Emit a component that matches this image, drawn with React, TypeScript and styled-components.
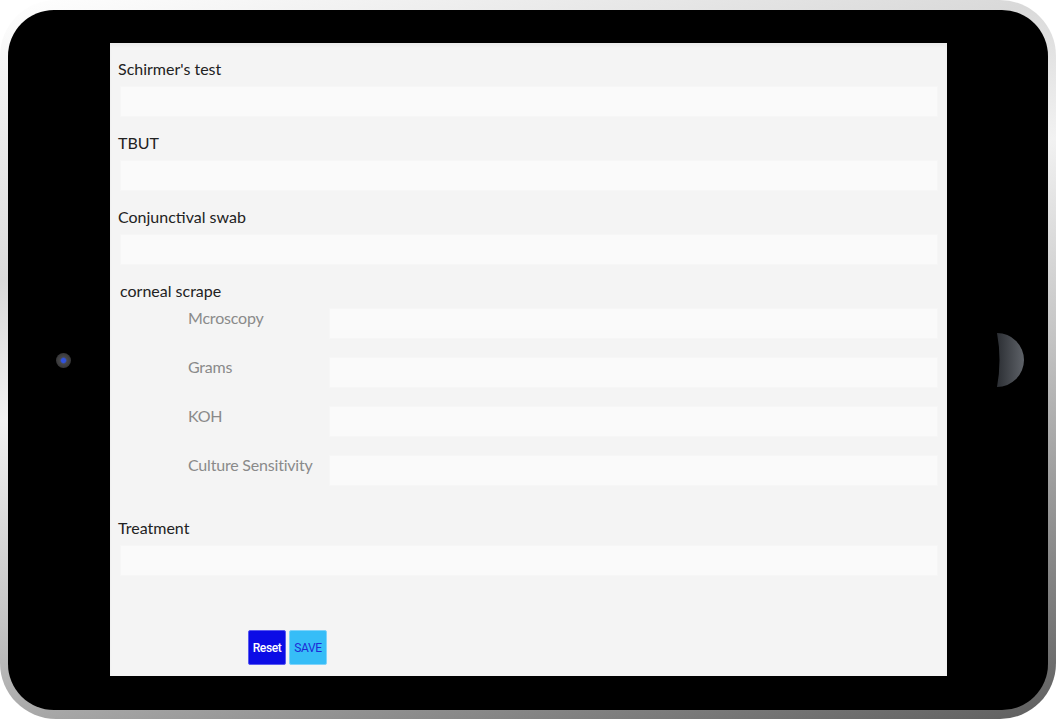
import React from 'react';
import styled, { createGlobalStyle } from 'styled-components';

const Global = createGlobalStyle`
  html, body {
    margin: 0;
    padding: 0;
    background: #ffffff;
  }
  * {
    box-sizing: border-box;
  }
`;

const Bezel = styled.div`
  width: 1056px;
  height: 719px;
  padding: 10px 8px 9px 8px;
  border-radius: 56px;
  background: linear-gradient(
    165deg,
    #ffffff 0%,
    #d9d9d9 28%,
    #f2f2f2 42%,
    #c4c4c4 62%,
    #8d8d8d 82%,
    #5f5f5f 100%
  );
`;

const Body = styled.div`
  width: 100%;
  height: 100%;
  background: #000;
  border-radius: 46px;
  display: flex;
  align-items: center;
`;

const SideColumn = styled.div<{ $width: number }>`
  width: ${(p) => p.$width}px;
  flex: none;
  display: flex;
  align-items: center;
  padding-left: 49px;
`;

const Camera = styled.div`
  width: 15px;
  height: 15px;
  margin-left: -1px;
  border-radius: 50%;
  background: radial-gradient(circle at 50% 50%, #2f52e0 0 2px, #474749 3.5px, #363638 7.5px);
`;

const Screen = styled.div`
  width: 837px;
  height: 633px;
  align-self: flex-start;
  margin-top: 33px;
  background: #f4f4f4;
  box-shadow: inset 0 3px 3px rgba(0, 0, 0, 0.035);
  padding: 16px 9px 0 8px;
  font-family: Lato, 'Noto Sans', sans-serif;
`;

const Section = styled.div`
  margin-bottom: 16px;
`;

const Label = styled.div<{ $shift?: number }>`
  font-size: 16px;
  line-height: 20px;
  color: #222;
  margin-bottom: 7px;
  margin-left: ${(p) => p.$shift ?? 0}px;
`;

const Field = styled.div`
  height: 31px;
  margin-left: 2px;
  background: #fafafa;
  border: 1px solid #f6f6f6;
`;

const SubList = styled.div`
  display: flex;
  flex-direction: column;
  gap: 18px;
  margin-left: 70px;
  margin-top: 1px;
  margin-bottom: 32px;
`;

const SubRow = styled.div`
  display: flex;
  align-items: flex-start;
`;

const SubLabel = styled.div`
  width: 141px;
  flex: none;
  font-size: 16px;
  line-height: 20px;
  letter-spacing: -0.2px;
  color: #8a8a8a;
`;

const SubField = styled.div`
  flex: 1;
  height: 31px;
  background: #fafafa;
  border: 1px solid #f6f6f6;
`;

const Actions = styled.div`
  display: flex;
  gap: 3px;
  margin-left: 130px;
  margin-top: 54px;
`;

const Button = styled.button<{ $primary?: boolean }>`
  width: 38px;
  height: 35px;
  padding: 0;
  border-radius: 2px;
  font-family: Roboto, 'Liberation Sans', sans-serif;
  font-size: 12px;
  font-weight: ${(p) => (p.$primary ? 500 : 400)};
  letter-spacing: -0.4px;
  cursor: pointer;
  background: ${(p) => (p.$primary ? '#0c0ce6' : '#36bdf7')};
  color: ${(p) => (p.$primary ? '#ffffff' : '#1e2bd6')};
  border: 1px solid ${(p) => (p.$primary ? '#5a5af0' : '#7fd3fa')};
`;

const HomeButton = () => (
  <svg width="28" height="54" viewBox="0 0 28 54">
    <defs>
      <linearGradient id="home-grad" x1="0" y1="0" x2="1" y2="0">
        <stop offset="0" stopColor="#2c2f34" />
        <stop offset="1" stopColor="#5e6268" />
      </linearGradient>
    </defs>
    <path d="M1 0 A27 27 0 0 1 1 54 Q6 27 1 0 Z" fill="url(#home-grad)" />
  </svg>
);

const sections = ["Schirmer's test", 'TBUT', 'Conjunctival swab'];
const scrapeItems = ['Mcroscopy', 'Grams', 'KOH', 'Culture Sensitivity'];

export default function App() {
  return (
    <>
      <Global />
      <Bezel>
        <Body>
          <SideColumn $width={102}>
            <Camera />
          </SideColumn>
          <Screen>
            {sections.map((name) => (
              <Section key={name}>
                <Label>{name}</Label>
                <Field />
              </Section>
            ))}
            <Label $shift={2}>corneal scrape</Label>
            <SubList>
              {scrapeItems.map((name) => (
                <SubRow key={name}>
                  <SubLabel>{name}</SubLabel>
                  <SubField />
                </SubRow>
              ))}
            </SubList>
            <Section>
              <Label>Treatment</Label>
              <Field />
            </Section>
            <Actions>
              <Button $primary>Reset</Button>
              <Button>SAVE</Button>
            </Actions>
          </Screen>
          <SideColumn $width={101}>
            <HomeButton />
          </SideColumn>
        </Body>
      </Bezel>
    </>
  );
}
